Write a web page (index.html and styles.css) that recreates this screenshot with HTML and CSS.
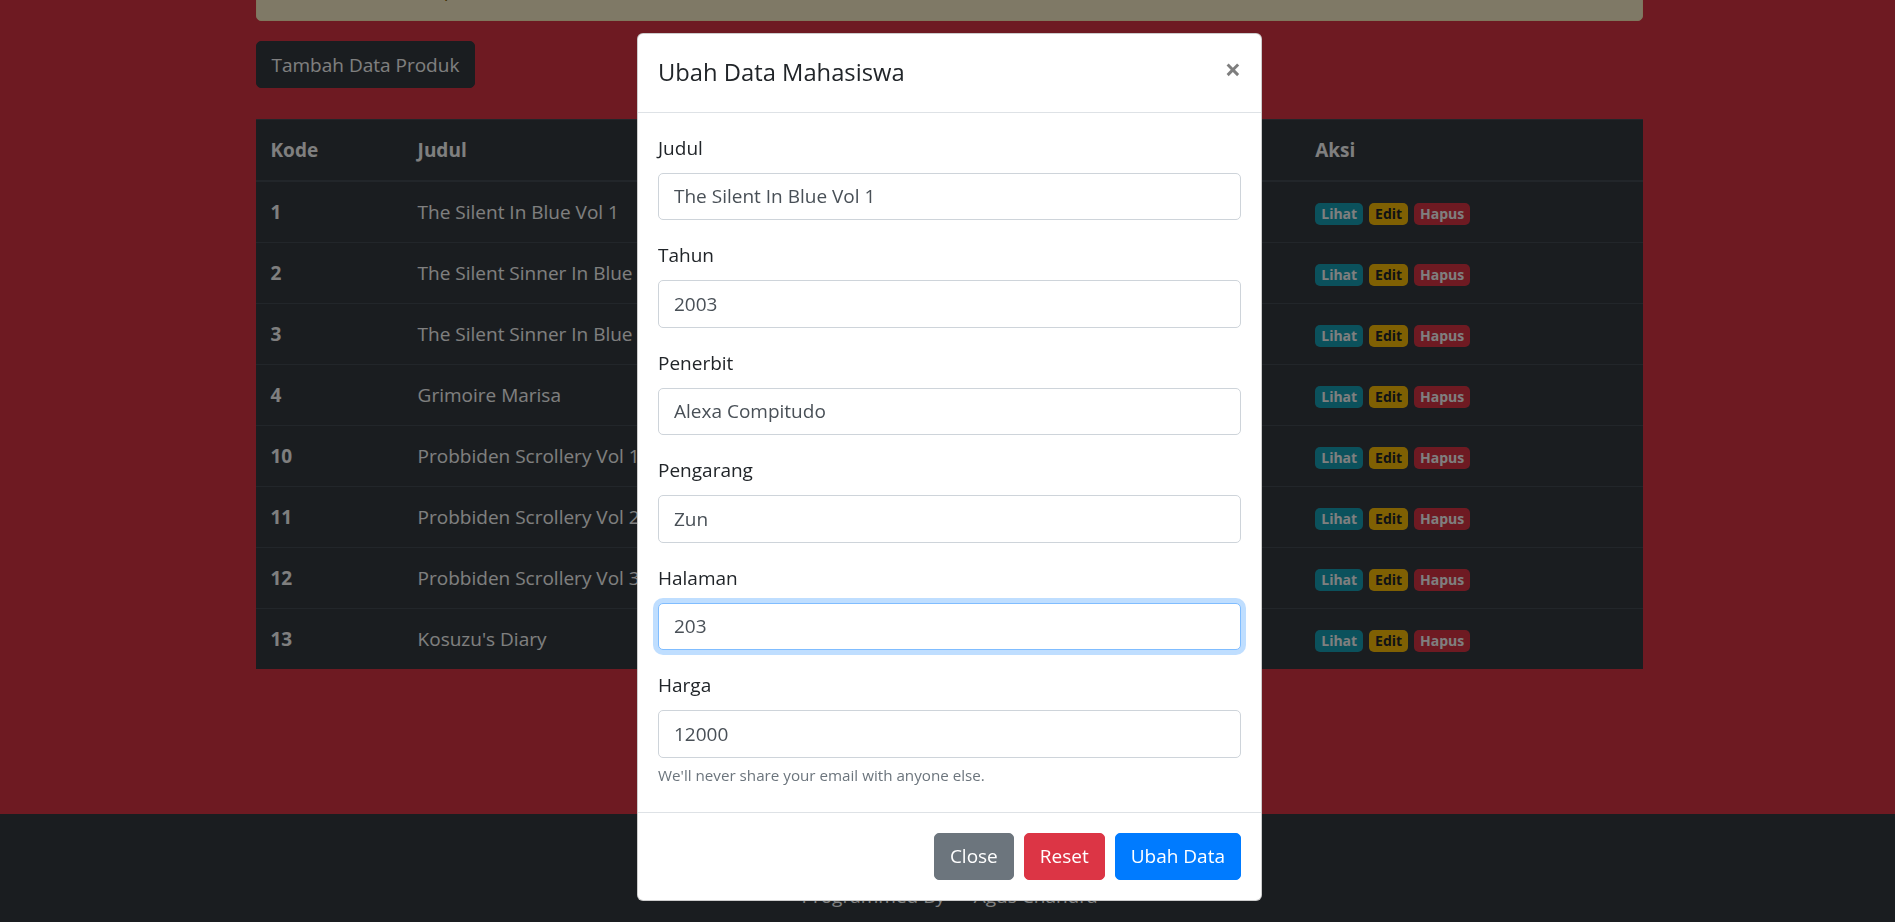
FILE: index.html
```html
<!DOCTYPE html>
<html lang="id">
<head>
<meta charset="utf-8">
<title>Data Produk</title>
<link rel="stylesheet" href="styles.css">
</head>
<body>
<div class="main">
  <div class="container">
    <div class="alert">Data buku telah diperbarui<span class="alert-close">&times;</span></div>
    <div class="actions"><a class="btn btn-dark" href="#">Tambah Data Produk</a></div>
    <table class="table">
      <colgroup>
        <col class="col-kode"><col class="col-judul"><col class="col-tahun"><col class="col-penerbit"><col class="col-harga"><col class="col-aksi">
      </colgroup>
      <thead>
        <tr><th>Kode</th><th>Judul</th><th>Tahun</th><th>Penerbit</th><th>Harga</th><th>Aksi</th></tr>
      </thead>
      <tbody>
        <tr><th>1</th><td>The Silent In Blue Vol 1</td><td>2003</td><td>Alexa Compitudo</td><td>12000</td><td><a class="badge badge-info">Lihat</a> <a class="badge badge-warning">Edit</a> <a class="badge badge-danger">Hapus</a></td></tr>
        <tr><th>2</th><td>The Silent Sinner In Blue Vol 1</td><td>2004</td><td>Alexa Compitudo</td><td>15000</td><td><a class="badge badge-info">Lihat</a> <a class="badge badge-warning">Edit</a> <a class="badge badge-danger">Hapus</a></td></tr>
        <tr><th>3</th><td>The Silent Sinner In Blue Vol 2</td><td>2005</td><td>Alexa Compitudo</td><td>15000</td><td><a class="badge badge-info">Lihat</a> <a class="badge badge-warning">Edit</a> <a class="badge badge-danger">Hapus</a></td></tr>
        <tr><th>4</th><td>Grimoire Marisa</td><td>2009</td><td>Ichijinsha</td><td>20000</td><td><a class="badge badge-info">Lihat</a> <a class="badge badge-warning">Edit</a> <a class="badge badge-danger">Hapus</a></td></tr>
        <tr><th>10</th><td>Probbiden Scrollery Vol 1</td><td>2012</td><td>Ichijinsha</td><td>18000</td><td><a class="badge badge-info">Lihat</a> <a class="badge badge-warning">Edit</a> <a class="badge badge-danger">Hapus</a></td></tr>
        <tr><th>11</th><td>Probbiden Scrollery Vol 2</td><td>2013</td><td>Ichijinsha</td><td>18000</td><td><a class="badge badge-info">Lihat</a> <a class="badge badge-warning">Edit</a> <a class="badge badge-danger">Hapus</a></td></tr>
        <tr><th>12</th><td>Probbiden Scrollery Vol 3</td><td>2014</td><td>Ichijinsha</td><td>18000</td><td><a class="badge badge-info">Lihat</a> <a class="badge badge-warning">Edit</a> <a class="badge badge-danger">Hapus</a></td></tr>
        <tr><th>13</th><td>Kosuzu's Diary</td><td>2015</td><td>Ichijinsha</td><td>16000</td><td><a class="badge badge-info">Lihat</a> <a class="badge badge-warning">Edit</a> <a class="badge badge-danger">Hapus</a></td></tr>
      </tbody>
    </table>
  </div>
</div>
<footer class="footer">Programmed By &mdash; Agus Chandra</footer>

<div class="backdrop"></div>
<div class="modal">
  <div class="modal-dialog">
    <div class="modal-content">
      <div class="modal-header">
        <h5 class="modal-title">Ubah Data Mahasiswa</h5>
        <button class="close" type="button">&times;</button>
      </div>
      <div class="modal-body">
        <form>
          <div class="form-group"><label>Judul</label><input class="form-control" type="text" value="The Silent In Blue Vol 1"></div>
          <div class="form-group"><label>Tahun</label><input class="form-control" type="text" value="2003"></div>
          <div class="form-group"><label>Penerbit</label><input class="form-control" type="text" value="Alexa Compitudo"></div>
          <div class="form-group"><label>Pengarang</label><input class="form-control" type="text" value="Zun"></div>
          <div class="form-group"><label>Halaman</label><input class="form-control form-control-focus" type="text" value="203"></div>
          <div class="form-group form-group-last"><label>Harga</label><input class="form-control" type="text" value="12000"><small class="form-text">We'll never share your email with anyone else.</small></div>
        </form>
      </div>
      <div class="modal-footer">
        <button class="btn btn-secondary" type="button">Close</button>
        <button class="btn btn-danger" type="button">Reset</button>
        <button class="btn btn-primary" type="button">Ubah Data</button>
      </div>
    </div>
  </div>
</div>
</body>
</html>
```
FILE: styles.css
```css
* { box-sizing: border-box; }
html, body { margin: 0; }
body {
  font-family: "Open Sans", "Noto Sans", sans-serif;
  font-size: 19px;
  line-height: 30px;
  color: #212529;
  background: #dc3545;
  overflow: hidden;
}

.main { padding-left: 3px; padding-bottom: 125px; }
.container { width: 1387px; margin: -41px auto 0; }

.alert {
  position: relative;
  padding: 15px 80px 15px 25px;
  margin-bottom: 20px;
  border: 1px solid #ffeeba;
  border-radius: 5px;
  background: #fff3cd;
  color: #856404;
}
.alert-close {
  position: absolute;
  top: 2px;
  right: 0;
  padding: 15px 25px;
  font-size: 28.5px;
  font-weight: 700;
  line-height: 30px;
  opacity: .5;
  text-shadow: 0 1px 0 #fff;
}

.actions { display: flex; margin-bottom: 31px; }

.btn {
  display: inline-block;
  font-family: inherit;
  font-size: 19px;
  line-height: 30px;
  font-weight: 400;
  padding: 7.5px 15px;
  border: 1px solid transparent;
  border-radius: 5px;
  color: #fff;
  text-align: center;
  text-decoration: none;
  cursor: pointer;
}
.btn-dark { background: #343a40; border-color: #343a40; }
.btn-secondary { background: #6c757d; border-color: #6c757d; }
.btn-danger { background: #dc3545; border-color: #dc3545; }
.btn-primary { background: #007bff; border-color: #007bff; }

.table {
  width: 100%;
  border-collapse: collapse;
  table-layout: fixed;
  background: #343a40;
  color: #fff;
  margin-bottom: 20px;
}
.col-kode { width: 147px; }
.col-judul { width: 330px; }
.col-tahun { width: 110px; }
.col-penerbit { width: 230px; }
.col-harga { width: 227px; }
.col-aksi { width: 342px; }
.table th, .table td {
  padding: 15px;
  border-top: 1px solid #454d55;
  text-align: left;
  vertical-align: top;
  white-space: nowrap;
}
.table thead th { border-bottom: 2px solid #454d55; font-weight: 700; }
.table tbody th { font-weight: 700; }

.badge {
  display: inline-block;
  padding: 3.75px 6px;
  font-size: 14px;
  font-weight: 700;
  line-height: 14px;
  border-radius: 5px;
  vertical-align: baseline;
  margin-right: 1px;
}
.badge-info { background: #17a2b8; color: #fff; }
.badge-warning { background: #ffc107; color: #212529; }
.badge-danger { background: #dc3545; color: #fff; }

.footer {
  background: #343a40;
  color: #fff;
  text-align: center;
  padding: 67px 0 60px 4px;
}

.backdrop { position: fixed; inset: 0; background: rgba(0, 0, 0, .5); }
.modal {
  position: fixed;
  inset: 0;
  display: flex;
  justify-content: center;
  align-items: flex-start;
  padding-left: 4px;
}
.modal-dialog { width: 625px; margin-top: 33px; }
.modal-content {
  background: #fff;
  border: 1px solid rgba(0, 0, 0, .2);
  border-radius: 6px;
}
.modal-header {
  display: flex;
  align-items: flex-start;
  justify-content: space-between;
  padding: 20px;
  border-bottom: 1px solid #dee2e6;
}
.modal-title { margin: 0; font-size: 23.75px; line-height: 37.5px; font-weight: 400; }
.close {
  padding: 20px;
  margin: -20px -20px -20px auto;
  background: transparent;
  border: 0;
  font-family: inherit;
  font-size: 28.5px;
  font-weight: 700;
  line-height: 30px;
  color: #000;
  text-shadow: 0 1px 0 #fff;
  opacity: .5;
}
.modal-body { padding: 20px; }
.form-group { margin-bottom: 20px; }
.form-group-last { margin-bottom: 5px; }
.form-group label { display: inline-block; margin-bottom: 10px; }
.form-control {
  display: block;
  width: 100%;
  height: 47.5px;
  padding: 7.5px 15px;
  font-family: inherit;
  font-size: 19px;
  line-height: 30px;
  color: #495057;
  background: #fff;
  border: 1px solid #ced4da;
  border-radius: 5px;
}
.form-control-focus {
  border-color: #80bdff;
  box-shadow: 0 0 0 5px rgba(0, 123, 255, .25);
  outline: 0;
}
.form-text { display: block; margin-top: 5px; font-size: 15.2px; line-height: 24px; color: #6c757d; }
.modal-footer {
  display: flex;
  justify-content: flex-end;
  align-items: center;
  padding: 15px;
  border-top: 1px solid #dee2e6;
}
.modal-footer .btn { margin: 5px; }
```
